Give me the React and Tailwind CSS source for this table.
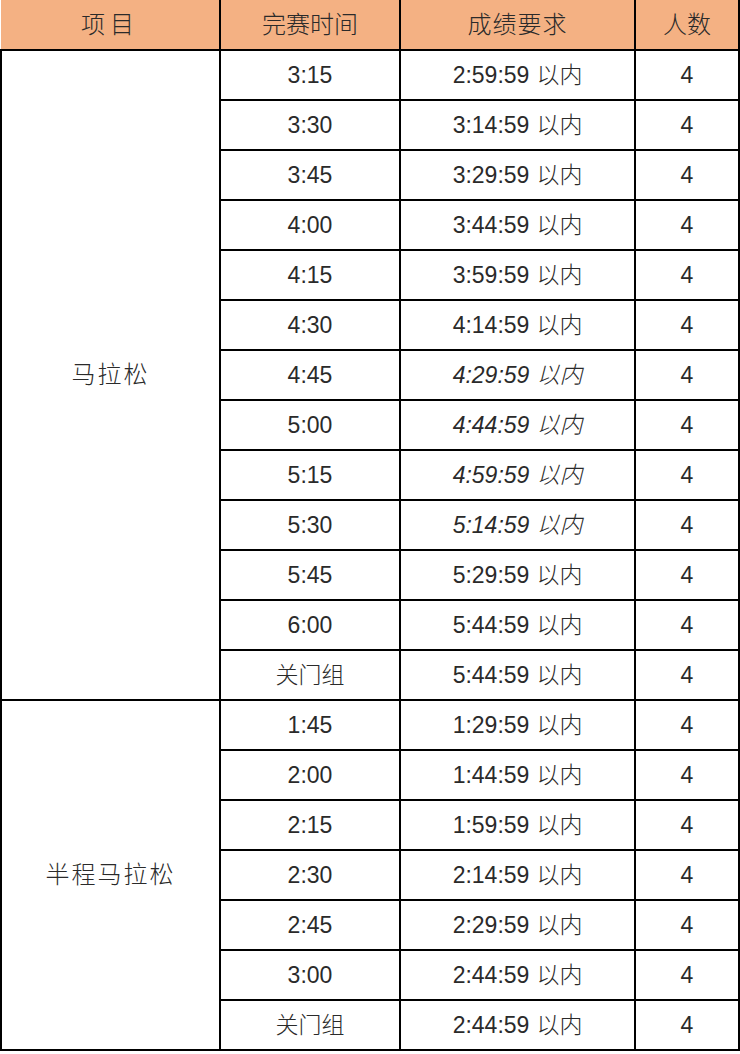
import React from 'react';

const marathon = [
  ['3:15', '2:59:59'],
  ['3:30', '3:14:59'],
  ['3:45', '3:29:59'],
  ['4:00', '3:44:59'],
  ['4:15', '3:59:59'],
  ['4:30', '4:14:59'],
  ['4:45', '4:29:59', true],
  ['5:00', '4:44:59', true],
  ['5:15', '4:59:59', true],
  ['5:30', '5:14:59', true],
  ['5:45', '5:29:59'],
  ['6:00', '5:44:59'],
  ['关门组', '5:44:59'],
];

const half = [
  ['1:45', '1:29:59'],
  ['2:00', '1:44:59'],
  ['2:15', '1:59:59'],
  ['2:30', '2:14:59'],
  ['2:45', '2:29:59'],
  ['3:00', '2:44:59'],
  ['关门组', '2:44:59'],
];

const cell = 'border-2 border-black h-[50px] p-0 text-center align-middle';

const Group = ({ name, rows }) => (
  <>
    {rows.map(([time, limit, italic], i) => (
      <tr key={i}>
        {i === 0 && (
          <td rowSpan={rows.length} className={`${cell} text-[24px] tracking-[2px]`}>
            {name}
          </td>
        )}
        <td className={`${cell} text-[23px]`}>{time}</td>
        <td className={`${cell} text-[23px] ${italic ? 'italic' : ''}`}>
          {limit}<span className="inline-block w-[7px]"></span>以内
        </td>
        <td className={`${cell} text-[23px]`}>4</td>
      </tr>
    ))}
  </>
);

export default function App() {
  return (
    <div className="w-[740px] h-[1054px] bg-white overflow-hidden">
      <table
        className="w-[738px] table-fixed border-collapse text-[#2a2a2a] font-light"
        style={{ fontFamily: '"Liberation Sans", "Noto Sans CJK SC", sans-serif' }}
      >
        <colgroup>
          <col className="w-[219px]" />
          <col className="w-[180px]" />
          <col className="w-[235px]" />
          <col className="w-[104px]" />
        </colgroup>
        <thead>
          <tr className="bg-[#f4b183]">
            <th className={`${cell} border-t-0 border-l-0 font-light text-[24px] tracking-[5px]`}>项目</th>
            <th className={`${cell} border-t-0 font-light text-[24px] tracking-[0px]`}>完赛时间</th>
            <th className={`${cell} border-t-0 font-light text-[24px] tracking-[1px]`}>成绩要求</th>
            <th className={`${cell} border-t-0 font-light text-[24px]`}>人数</th>
          </tr>
        </thead>
        <tbody>
          <Group name="马拉松" rows={marathon} />
          <Group name="半程马拉松" rows={half} />
        </tbody>
      </table>
    </div>
  );
}
